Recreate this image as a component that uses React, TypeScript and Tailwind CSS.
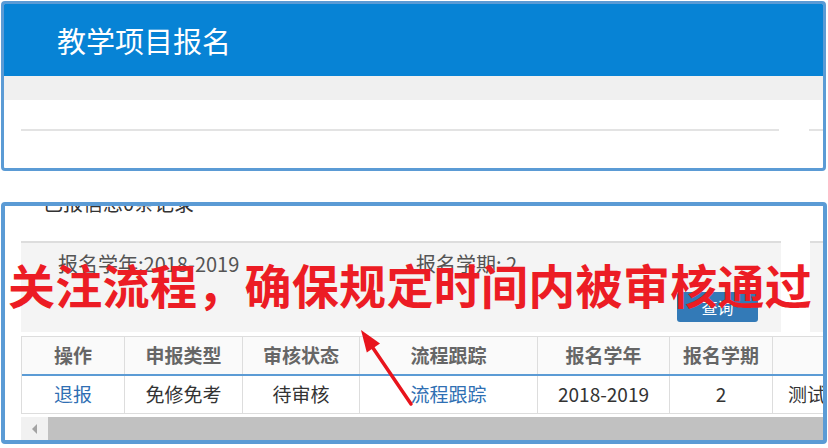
export default function App() {
  const cols = [
    { w: 103, h: '操作', b: '退报', link: true },
    { w: 118, h: '申报类型', b: '免修免考' },
    { w: 117, h: '审核状态', b: '待审核' },
    { w: 178, h: '流程跟踪', b: '流程跟踪', link: true },
    { w: 132, h: '报名学年', b: '2018-2019' },
    { w: 103, h: '报名学期', b: '2' },
    { w: 260, h: '', b: '测试项目', left: true },
  ];
  return (
    <div className="relative w-[828px] h-[448px] overflow-hidden bg-white font-['Noto_Sans_CJK_SC',sans-serif]">
      {/* top frame */}
      <div className="ml-[1px] mt-[1px] w-[825px] h-[170px] border-[3px] border-[#5b9bd5] rounded-[4px] overflow-hidden">
        <div className="h-[72px] bg-[#0783d5] pl-[53px] flex items-center text-white text-[29px] leading-none">
          教学项目报名
        </div>
        <div className="h-[24px] bg-[#f0f0f0]" />
        <div className="pt-[29px] flex">
          <div className="ml-[17px] w-[758px] h-[2px] bg-[#e3e3e3]" />
          <div className="ml-[30px] flex-1 h-[2px] bg-[#e3e3e3]" />
        </div>
      </div>

      {/* bottom frame */}
      <div className="ml-[1px] mt-[31px] w-[826px] h-[242px] border-[4px] border-[#5b9bd5] rounded-[4px] overflow-hidden">
        <div className="h-[35px] flex flex-col">
          <div className="-mt-[13px] pl-[38px] text-[20px] leading-[20px] text-[#333] whitespace-nowrap">已报信息0条记录</div>
        </div>
        <div className="flex h-[91px]">
          <div className="ml-[16px] w-[760px] shrink-0 border-t-2 border-[#dddddd] bg-[#f4f4f4]">
            <div className="flex pt-[11px] pl-[37px] text-[20px] leading-[20px] text-[#555] whitespace-nowrap">
              <span className="w-[358px]">报名学年:2018-2019</span>
              <span>报名学期: 2</span>
            </div>
            <div className="flex justify-end pr-[23px] mt-[18px]">
              <div className="w-[81px] h-[30px] bg-[#337ab7] rounded-[3px] text-white text-[16px] flex items-center justify-center">查询</div>
            </div>
          </div>
          <div className="ml-[29px] flex-1 border-t-2 border-[#dddddd] bg-[#f4f4f4]" />
        </div>
        <div className="mt-[4px] ml-[16px] w-[1200px] border-l border-[#dddddd]">
          <div className="flex h-[40px] border-t border-[#dddddd] border-b-2 border-b-[#5b9bd5] bg-[#fafafa]">
            {cols.map((c, i) => (
              <div
                key={i}
                style={{ width: c.w }}
                className="shrink-0 h-full border-r border-[#dddddd] flex items-center justify-center text-[19px] font-bold text-[#666] whitespace-nowrap"
              >
                {c.h}
              </div>
            ))}
          </div>
          <div className="flex h-[38px] border-b border-[#dddddd] bg-white">
            {cols.map((c, i) => (
              <div
                key={i}
                style={{ width: c.w }}
                className={
                  'shrink-0 h-full border-r border-[#dddddd] flex items-center text-[19px] whitespace-nowrap ' +
                  (c.left ? 'justify-start pl-[15px] ' : 'justify-center ') +
                  (c.link ? 'text-[#2f6fb3]' : 'text-[#333]')
                }
              >
                {c.b}
              </div>
            ))}
          </div>
        </div>
        <div className="mt-[3px] ml-[16px] flex h-[23px]">
          <div className="w-[27px] bg-[#f1f1f1] flex items-center justify-center">
            <div className="w-0 h-0 border-y-[5px] border-y-transparent border-r-[5px] border-r-[#a3a3a3]" />
          </div>
          <div className="flex-1 bg-[#c1c1c1]" />
        </div>
      </div>

      {/* annotation */}
      <div className="absolute left-[8px] top-[260px] text-[47px] leading-[47px] tracking-[0.3px] font-bold text-[#ec1c24] whitespace-nowrap">
        关注流程，确保规定时间内被审核通过
      </div>
      <svg className="absolute left-0 top-0 pointer-events-none" width="828" height="448" viewBox="0 0 828 448">
        <line x1="411" y1="404" x2="373" y2="348" stroke="#e8141c" strokeWidth="3.5" strokeLinecap="round" />
        <polygon points="361,330 380,343.6 366.8,352.6" fill="#e8141c" />
      </svg>
    </div>
  );
}
